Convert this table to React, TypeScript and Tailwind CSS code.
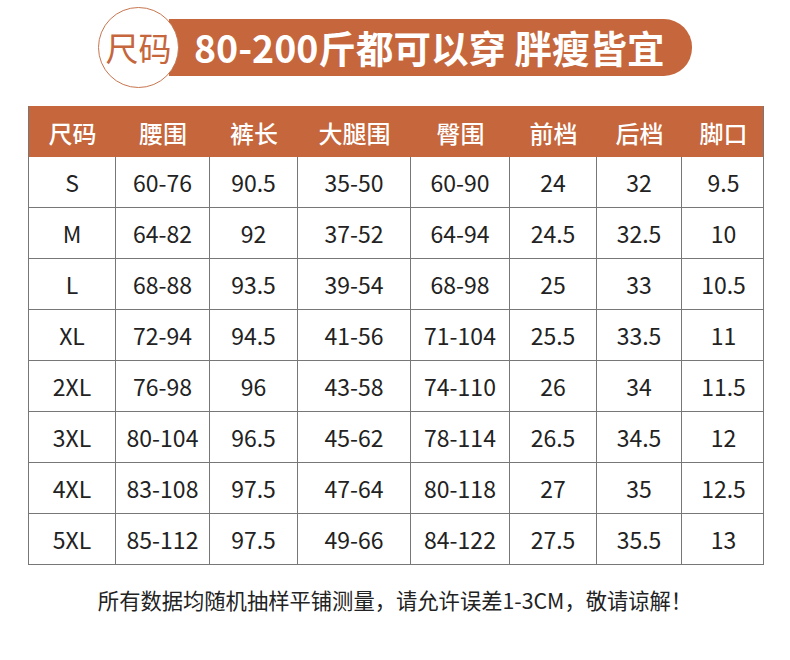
const HEADERS = ["尺码", "腰围", "裤长", "大腿围", "臀围", "前档", "后档", "脚口"];

const ROWS: string[][] = [
  ["S", "60-76", "90.5", "35-50", "60-90", "24", "32", "9.5"],
  ["M", "64-82", "92", "37-52", "64-94", "24.5", "32.5", "10"],
  ["L", "68-88", "93.5", "39-54", "68-98", "25", "33", "10.5"],
  ["XL", "72-94", "94.5", "41-56", "71-104", "25.5", "33.5", "11"],
  ["2XL", "76-98", "96", "43-58", "74-110", "26", "34", "11.5"],
  ["3XL", "80-104", "96.5", "45-62", "78-114", "26.5", "34.5", "12"],
  ["4XL", "83-108", "97.5", "47-64", "80-118", "27", "35", "12.5"],
  ["5XL", "85-112", "97.5", "49-66", "84-122", "27.5", "35.5", "13"],
];

const GRID = "grid grid-cols-[87px_94px_88px_113px_99px_87px_85px_83px]";

export default function App() {
  return (
    <div
      className="w-[790px] h-[660px] bg-white text-[#222] overflow-hidden"
      style={{ fontFamily: '"Noto Sans CJK SC", "Noto Sans", sans-serif' }}
    >
      {/* Title */}
      <div className="flex items-center pt-[7px] pl-[98px]">
        <div className="relative z-10 w-[81px] h-[81px] shrink-0 rounded-full bg-white border border-[#c8764f] flex items-center justify-center">
          <span className="text-[33px] leading-none text-[#c5663c] pb-[1px]">尺码</span>
        </div>
        <div className="-ml-[10px] w-[523px] h-[57px] bg-[#c5663c] rounded-r-[28px] flex items-center pl-[25px]">
          <span className="text-[37.5px] leading-none font-bold text-white pb-[2px]">
            80-200斤都可以穿 胖瘦皆宜
          </span>
        </div>
      </div>

      {/* Size table */}
      <div className="ml-[28px] mt-[18px] w-[736px] border-x border-[#777]">
        <div className={`${GRID} h-[51px] bg-[#c5663c]`}>
          {HEADERS.map((h) => (
            <div key={h} className="flex items-center justify-center text-[24px] font-medium text-white pt-[3px]">
              {h}
            </div>
          ))}
        </div>
        {ROWS.map((row) => (
          <div key={row[0]} className={`${GRID} h-[51px] border-b border-[#777]`}>
            {row.map((cell, i) => (
              <div
                key={i}
                className={`flex items-center justify-center text-[23px] ${i < row.length - 1 ? "border-r border-[#777]" : ""}`}
              >
                {cell}
              </div>
            ))}
          </div>
        ))}
      </div>

      {/* Note */}
      <p className="mt-[20px] text-center text-[21.3px] leading-[30px] text-[#222]">
        所有数据均随机抽样平铺测量，请允许误差1-3CM，敬请谅解！
      </p>
    </div>
  );
}
